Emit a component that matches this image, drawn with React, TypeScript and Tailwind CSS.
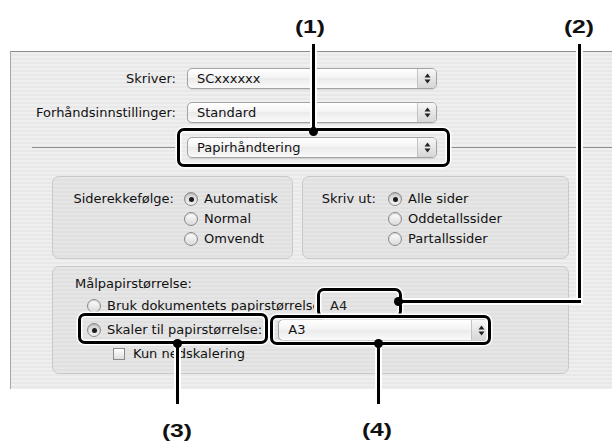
import React from "react";
import clsx from "clsx";

const stripes =
  "bg-[repeating-linear-gradient(180deg,#efefef_0px,#efefef_2px,#e8e8e8_2px,#e8e8e8_4px)]";
const boxStripes =
  "bg-[repeating-linear-gradient(180deg,#e6e6e6_0px,#e6e6e6_2px,#e0e0e0_2px,#e0e0e0_4px)]";

function Arrows() {
  return (
    <svg width="7" height="11" viewBox="0 0 7 11">
      <path d="M3.5 0.5 L6.5 4.5 L0.5 4.5 Z" fill="#222" />
      <path d="M0.5 6.5 L6.5 6.5 L3.5 10.5 Z" fill="#222" />
    </svg>
  );
}

function Popup({ label, className }: { label: string; className?: string }) {
  return (
    <div
      className={clsx(
        "flex h-[21px] items-stretch rounded-[5px] border border-[#a3a3a3] bg-[linear-gradient(180deg,#ffffff,#f3f3f3_50%,#ebebeb_50%,#fafafa)] shadow-[0_1px_1px_rgba(0,0,0,0.1)]",
        className
      )}
    >
      <span className="flex-1 pl-[9px] leading-[19px]">{label}</span>
      <span className="flex w-[19px] items-center justify-center rounded-r-[4px] border-l border-[#c4c4c4] bg-[linear-gradient(180deg,#f7f7f7,#d6d6d6)]">
        <Arrows />
      </span>
    </div>
  );
}

function Radio({ on }: { on?: boolean }) {
  return (
    <span
      className={clsx(
        "inline-flex h-[14px] w-[14px] shrink-0 items-center justify-center rounded-full border border-[#8a8a8a] shadow-[inset_0_1px_1px_rgba(0,0,0,0.18)]",
        on
          ? "bg-[linear-gradient(180deg,#cfcfcf,#f2f2f2)]"
          : "bg-[linear-gradient(180deg,#ffffff,#dadada)]"
      )}
    >
      {on && <span className="h-[5px] w-[5px] rounded-full bg-[#1c1c1c]" />}
    </span>
  );
}

function RadioRow({ on, label }: { on?: boolean; label: string }) {
  return (
    <div className="flex h-[20px] items-center gap-[6px]">
      <Radio on={on} />
      <span>{label}</span>
    </div>
  );
}

function Callout({ className }: { className: string }) {
  return (
    <div
      className={clsx(
        "absolute rounded-[7px] border-[3px] border-black shadow-[0_0_0_1.5px_#fff,inset_0_0_0_1.5px_#fff]",
        className
      )}
    />
  );
}

function Line({ className }: { className: string }) {
  return <div className={clsx("absolute bg-black shadow-[0_0_0_2px_#fff]", className)} />;
}

function Dot({ className }: { className: string }) {
  return <div className={clsx("absolute h-[9px] w-[9px] rounded-full bg-black", className)} />;
}

function Tag({ text, className }: { text: string; className: string }) {
  return (
    <span
      className={clsx(
        "absolute w-[40px] scale-x-[1.3] text-center font-['Liberation_Sans',Arial,sans-serif] text-[19px] font-bold leading-[20px] text-[#111]",
        className
      )}
    >
      {text}
    </span>
  );
}

export default function App() {
  return (
    <div className="relative h-[441px] w-[612px] overflow-hidden bg-white font-['DejaVu_Sans',sans-serif] text-[13px] text-[#111]">
      <div
        className={clsx(
          "ml-[10px] mt-[51px] h-[338px] w-[602px] border-l border-t border-l-[#a8a8a8] border-t-[#8c8c8c]",
          stripes
        )}
      >
        {/* printer + presets */}
        <div className="mt-[16px] flex items-center">
          <span className="w-[165px] text-right">Skriver:</span>
          <Popup label="SCxxxxxx" className="ml-[11px] w-[250px]" />
        </div>
        <div className="mt-[13px] flex items-center">
          <span className="w-[165px] text-right">Forhåndsinnstillinger:</span>
          <Popup label="Standard" className="ml-[11px] w-[250px]" />
        </div>
        <div className="mt-[14px] flex items-center">
          <div className="ml-[21px] h-px w-[143px] bg-[#8f8f8f]" />
          <Popup label="Papirhåndtering" className="ml-[12px] w-[250px]" />
          <div className="ml-[13px] h-px flex-1 bg-[#8f8f8f]" />
        </div>

        {/* order + pages */}
        <div className="ml-[41px] mt-[18px] flex gap-[9px]">
          <div className={clsx("flex h-[83px] w-[241px] rounded-[7px] border border-[#c9c9c9] pt-[12px]", boxStripes)}>
            <span className="w-[121px] text-right leading-[20px]">Siderekkefølge:</span>
            <div className="ml-[10px]">
              <RadioRow on label="Automatisk" />
              <RadioRow label="Normal" />
              <RadioRow label="Omvendt" />
            </div>
          </div>
          <div className={clsx("flex h-[83px] w-[267px] rounded-[7px] border border-[#c9c9c9] pt-[12px]", boxStripes)}>
            <span className="w-[73px] text-right leading-[20px]">Skriv ut:</span>
            <div className="ml-[12px]">
              <RadioRow on label="Alle sider" />
              <RadioRow label="Oddetallssider" />
              <RadioRow label="Partallssider" />
            </div>
          </div>
        </div>

        {/* paper size */}
        <div className={clsx("ml-[41px] mt-[7px] h-[108px] w-[517px] rounded-[7px] border border-[#c9c9c9] pt-[8px]", boxStripes)}>
          <div className="h-[18px] pl-[22px] leading-[18px]">Målpapirstørrelse:</div>
          <div className="mt-[4px] flex h-[18px] items-center pl-[34px]">
            <Radio />
            <span className="ml-[6px] w-[207px] overflow-hidden whitespace-nowrap">
              Bruk dokumentets papirstørrelse
            </span>
            <span className="pl-[16px] text-[#222]">A4</span>
          </div>
          <div className="mt-[4px] flex h-[22px] items-center pl-[34px]">
            <Radio on />
            <span className="ml-[6px]">Skaler til papirstørrelse:</span>
            <Popup label="A3" className="ml-[16px] h-[22px] w-[213px]" />
          </div>
          <div className="mt-[4px] flex h-[18px] items-center pl-[60px]">
            <span className="h-[12px] w-[12px] border border-[#8a8a8a] bg-[linear-gradient(180deg,#ffffff,#dedede)]" />
            <span className="ml-[8px]">Kun nedskalering</span>
          </div>
        </div>
      </div>

      {/* annotations */}
      <Callout className="left-[177px] top-[128px] h-[39px] w-[273px]" />
      <Line className="left-[312px] top-[44px] h-[87px] w-[3px]" />
      <Dot className="left-[309px] top-[127px]" />
      <Tag text="(1)" className="left-[290px] top-[17px]" />

      <Callout className="left-[317px] top-[288px] h-[30px] w-[85px]" />
      <Line className="left-[578px] top-[44px] h-[259px] w-[3px]" />
      <Line className="left-[398px] top-[300px] h-[3px] w-[183px]" />
      <Dot className="left-[394px] top-[297px]" />
      <Tag text="(2)" className="left-[559px] top-[17px]" />

      <Callout className="left-[78px] top-[313px] h-[31px] w-[190px]" />
      <Callout className="left-[270px] top-[315px] h-[30px] w-[221px]" />
      <Line className="left-[176px] top-[343px] h-[61px] w-[3px]" />
      <Dot className="left-[173px] top-[339px]" />
      <Tag text="(3)" className="left-[157px] top-[421px]" />

      <Line className="left-[377px] top-[343px] h-[61px] w-[3px]" />
      <Dot className="left-[374px] top-[339px]" />
      <Tag text="(4)" className="left-[357px] top-[420px]" />
    </div>
  );
}
